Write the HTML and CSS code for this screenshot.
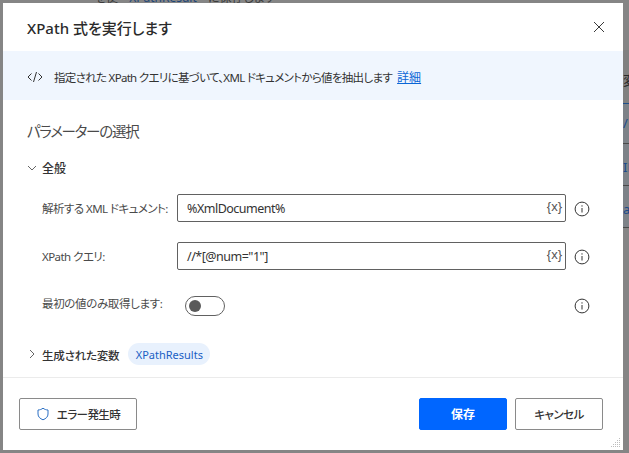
FILE: index.html
```html
<!DOCTYPE html>
<html lang="ja">
<head>
<meta charset="utf-8">
<title>XPath 式を実行します</title>
<link rel="stylesheet" href="styles.css">
</head>
<body>
<div class="peek-top">を使 <span class="peek-blue">XPathResult</span> に保存します</div>
<div class="peek-side">
  <div class="peek-cell peek-k">変</div>
  <div class="peek-cell peek-b">/「</div>
  <div class="peek-cell peek-b peek-tall">ID</div>
  <div class="peek-cell peek-b peek-tall">at</div>
</div>
<main class="dialog">
  <header class="head">
    <h1 class="title">XPath 式を実行します</h1>
    <svg class="close" viewBox="0 0 12 12" width="12" height="12"><path d="M1 1l10 10M11 1L1 11" fill="none" stroke="#3a3a3a" stroke-width="1"/></svg>
  </header>
  <div class="band">
    <svg class="code" viewBox="0 0 16 12" width="16" height="12"><path d="M4.500 2.500L1 6l3.500 3.500M11.500 2.500L15 6l-3.500 3.500M9.500 1L6.500 11" fill="none" stroke="#333" stroke-width="1"/></svg>
    <span class="band-text">指定された XPath クエリに基づいて、XML ドキュメントから値を抽出します</span>
    <a class="link" href="#">詳細</a>
  </div>
  <section class="body">
    <h2 class="section">パラメーターの選択</h2>
    <div class="group">
      <svg class="chev" viewBox="0 0 10 10" width="10" height="10"><path d="M1 3l4 4 4-4" fill="none" stroke="#666" stroke-width="1"/></svg>
      <span class="group-name">全般</span>
    </div>
    <div class="row">
      <label class="label">解析する XML ドキュメント:</label>
      <div class="input"><span class="value">%XmlDocument%</span><span class="var">{x}</span></div>
      <svg class="info" viewBox="0 0 16 16" width="16" height="16"><circle cx="8" cy="8" r="6.900" fill="none" stroke="#333" stroke-width="1"/><path d="M8 7v4.500" stroke="#333" stroke-width="1"/><circle cx="8" cy="4.900" r=".7" fill="#333"/></svg>
    </div>
    <div class="row">
      <label class="label">XPath クエリ:</label>
      <div class="input"><span class="value">//*[@num="1"]</span><span class="var">{x}</span></div>
      <svg class="info" viewBox="0 0 16 16" width="16" height="16"><circle cx="8" cy="8" r="6.900" fill="none" stroke="#333" stroke-width="1"/><path d="M8 7v4.500" stroke="#333" stroke-width="1"/><circle cx="8" cy="4.900" r=".7" fill="#333"/></svg>
    </div>
    <div class="row row-toggle">
      <label class="label label-toggle">最初の値のみ取得します:</label>
      <div class="toggle-wrap"><div class="toggle"><span class="knob"></span></div></div>
      <svg class="info" viewBox="0 0 16 16" width="16" height="16"><circle cx="8" cy="8" r="6.900" fill="none" stroke="#333" stroke-width="1"/><path d="M8 7v4.500" stroke="#333" stroke-width="1"/><circle cx="8" cy="4.900" r=".7" fill="#333"/></svg>
    </div>
    <div class="vars">
      <svg class="chev" viewBox="0 0 10 10" width="10" height="10"><path d="M3 1l4 4-4 4" fill="none" stroke="#666" stroke-width="1"/></svg>
      <span class="group-name vars-name">生成された変数</span>
      <span class="pill">XPathResults</span>
    </div>
  </section>
  <footer class="foot">
    <button class="btn btn-error">
      <svg class="shield" viewBox="0 0 14 14" width="14" height="14"><path d="M7 1.200c1.500 1.200 3.200 1.700 5 1.800v4c0 2.800-2 4.600-5 5.800-3-1.200-5-3-5-5.800V3c1.800-.1 3.500-.6 5-1.800z" fill="none" stroke="#2a6fc4" stroke-width="1"/></svg>
      エラー発生時
    </button>
    <div class="foot-gap"></div>
    <button class="btn btn-primary">保存</button>
    <button class="btn btn-cancel">キャンセル</button>
  </footer>
  <svg class="grip" viewBox="0 0 10 10" width="10" height="10"><g fill="#bdbdbd"><rect x="8" y="0" width="1" height="1"/><rect x="8" y="2" width="1" height="1"/><rect x="6" y="2" width="1" height="1"/><rect x="8" y="4" width="1" height="1"/><rect x="6" y="4" width="1" height="1"/><rect x="4" y="4" width="1" height="1"/><rect x="8" y="6" width="1" height="1"/><rect x="6" y="6" width="1" height="1"/><rect x="4" y="6" width="1" height="1"/><rect x="2" y="6" width="1" height="1"/><rect x="8" y="8" width="1" height="1"/><rect x="6" y="8" width="1" height="1"/><rect x="4" y="8" width="1" height="1"/><rect x="2" y="8" width="1" height="1"/><rect x="0" y="8" width="1" height="1"/></g></svg>
</main>
</body>
</html>
```
FILE: styles.css
```css
* { box-sizing: border-box; }
html, body { margin: 0; height: 100%; }
body {
  width: 629px;
  height: 453px;
  overflow: hidden;
  background: #858585;
  position: relative;
  font-family: "Noto Sans", "Noto Sans CJK JP", sans-serif;
  font-feature-settings: "palt";
  color: #333;
  padding: 3px 6px 3px 3px;
}
.peek-top {
  position: absolute;
  left: 95px;
  top: -9px;
  font-size: 12px;
  line-height: 14px;
  color: #3b3b3b;
}
.peek-blue { color: #1c4478; margin: 0 8px; }
.peek-side {
  position: absolute;
  left: 623px;
  top: 50px;
  width: 6px;
  height: 178px;
  background: #808080;
  overflow: hidden;
  font-size: 13px;
}
.peek-cell { height: 40px; line-height: 38px; border-bottom: 1px solid #4a4a4a; white-space: nowrap; }
.peek-k { height: 54px; line-height: 60px; color: #2b2b2b; border-bottom-color: #1f4f8a; }
.peek-b { color: #1c4a8a; background: #7d8288; }
.peek-tall { height: 42px; line-height: 46px; }
.dialog {
  width: 620px;
  height: 447px;
  background: #fff;
  display: flex;
  flex-direction: column;
  position: relative;
}
.head {
  height: 48px;
  display: flex;
  align-items: center;
  justify-content: space-between;
  padding: 0 18px 0 24px;
}
.title { margin: 0; font-size: 15px; font-weight: 500; color: #2b2b2b; }
.close { display: block; }
.band {
  height: 49px;
  background: #f0f6fe;
  display: flex;
  align-items: center;
  padding: 2px 0 0 24px;
  font-size: 11.5px;
  letter-spacing: -0.69px;
  color: #333;
}
.code { margin-right: 11px; }
.band-text { white-space: nowrap; margin-right: 5px; }
.link { color: #0b66d6; text-decoration: underline; font-size: 12px; letter-spacing: 0; }
.body { flex: 1; padding: 0 0 0 24px; border-bottom: 1px solid #ebebeb; }
.section { margin: 20px 0 0; font-size: 14.5px; letter-spacing: -1.25px; line-height: 22px; font-weight: 400; color: #4a4a4a; }
.group { display: flex; align-items: center; height: 20px; margin-top: 16px; font-size: 12px; }
.chev { display: block; margin-right: 5px; margin-left: 0; flex: none; }
.group-name { font-weight: 500; color: #333; font-size: 12px; }
.vars-name { font-size: 11.5px; letter-spacing: -0.2px; padding-top: 1px; }
.row { display: flex; align-items: center; height: 28px; margin-bottom: 20px; padding-left: 15px; }
.group + .row { margin-top: 16px; }
.label { width: 135px; flex: none; font-size: 11.5px; letter-spacing: -0.55px; color: #4a4a4a; white-space: nowrap; }
.input {
  width: 389px;
  height: 28px;
  border: 1px solid #616161;
  border-radius: 2px;
  display: flex;
  align-items: center;
  justify-content: space-between;
  padding: 0 3px 0 9px;
  font-size: 12.5px;
}
.value { color: #333; letter-spacing: -0.5px; }
.var { font-size: 13px; color: #555; font-family: "Liberation Sans", sans-serif; margin-top: -3px; }
.info { margin-left: 8px; margin-top: 2px; display: block; flex: none; }
.row-toggle { height: 20px; margin-bottom: 0; margin-top: 26px; }
.label-toggle { width: 143px; margin-top: -6px; letter-spacing: -0.35px; }
.row-toggle .info { margin-top: 0; }
.toggle-wrap { width: 381px; flex: none; }
.toggle {
  width: 40px;
  height: 20px;
  border: 1px solid #616161;
  border-radius: 10px;
  display: flex;
  align-items: center;
  padding-left: 3px;
}
.knob { width: 12px; height: 12px; border-radius: 50%; background: #5a5a5a; }
.vars { display: flex; align-items: center; height: 22px; margin-top: 27px; }
.pill {
  margin-left: 9px;
  height: 22px;
  width: 82px;
  border-radius: 11px;
  background: #e8f1fd;
  color: #1a5fc4;
  font-size: 11px;
  line-height: 23px;
  text-align: center;
}
.foot {
  height: 72px;
  display: flex;
  align-items: flex-start;
  padding: 20px 20px 0 16px;
}
.foot-gap { flex: 1; }
.btn {
  height: 32px;
  border-radius: 2px;
  font: inherit;
  font-size: 12px;
  font-weight: 500;
  border: 1px solid #8a8a8a;
  background: #fff;
  color: #333;
  display: flex;
  align-items: center;
  justify-content: center;
  padding: 0;
}
.btn-error { width: 118px; font-size: 11.5px; letter-spacing: -0.55px; }
.shield { margin-right: 7px; }
.btn-primary { width: 88px; background: #0066ff; border-color: #0066ff; color: #fff; margin-right: 8px; font-weight: 700; }
.btn-cancel { width: 88px; font-size: 11.5px; letter-spacing: -0.55px; }
.grip { position: absolute; right: 2px; bottom: 2px; }
```
